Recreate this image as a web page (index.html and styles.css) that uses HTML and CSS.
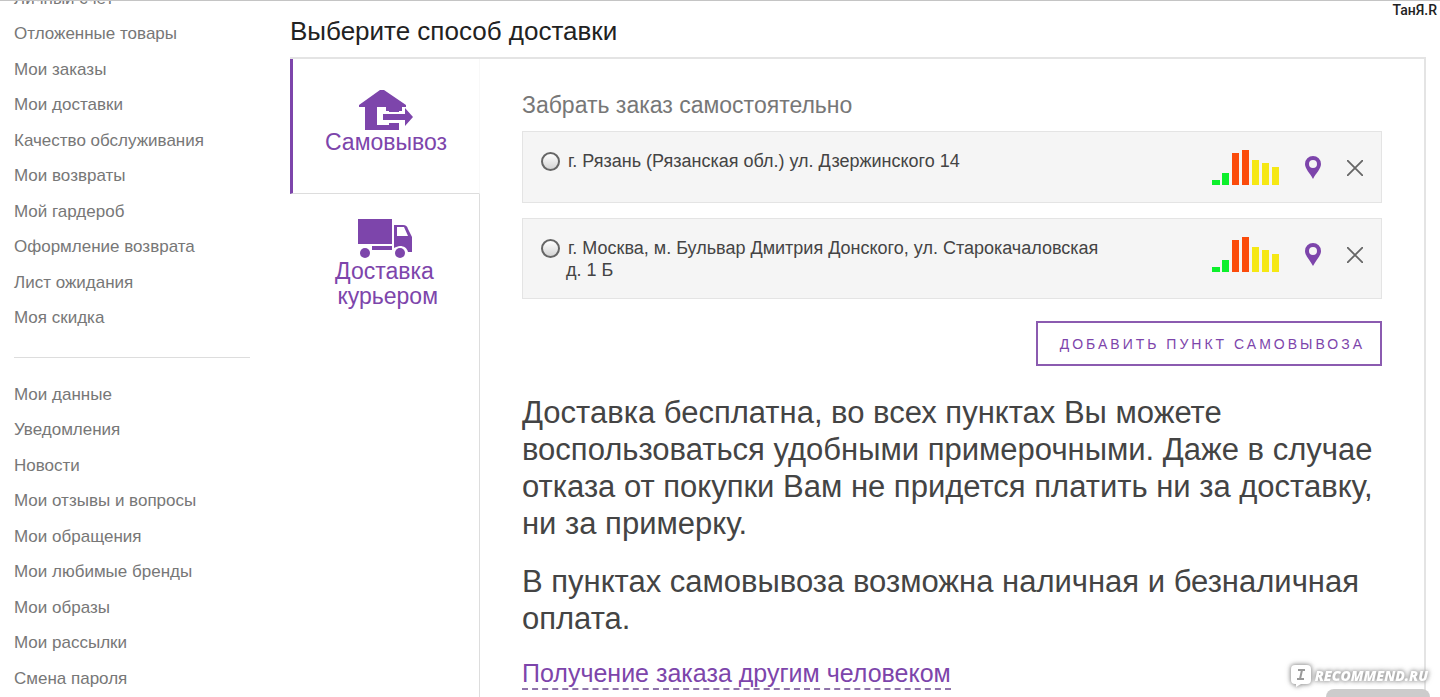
FILE: index.html
```html
<!DOCTYPE html>
<html lang="ru">
<head>
<meta charset="utf-8">
<title>Выберите способ доставки</title>
<link rel="stylesheet" href="styles.css">
</head>
<body>
<div class="page">
  <nav class="sidebar" aria-label="Личный кабинет">
    <ul class="menu">
      <li><a href="#">Личный счёт</a></li>
      <li><a href="#">Отложенные товары</a></li>
      <li><a href="#">Мои заказы</a></li>
      <li><a href="#">Мои доставки</a></li>
      <li><a href="#">Качество обслуживания</a></li>
      <li><a href="#">Мои возвраты</a></li>
      <li><a href="#">Мой гардероб</a></li>
      <li><a href="#">Оформление возврата</a></li>
      <li><a href="#">Лист ожидания</a></li>
      <li><a href="#">Моя скидка</a></li>
    </ul>
    <ul class="menu menu-second">
      <li><a href="#">Мои данные</a></li>
      <li><a href="#">Уведомления</a></li>
      <li><a href="#">Новости</a></li>
      <li><a href="#">Мои отзывы и вопросы</a></li>
      <li><a href="#">Мои обращения</a></li>
      <li><a href="#">Мои любимые бренды</a></li>
      <li><a href="#">Мои образы</a></li>
      <li><a href="#">Мои рассылки</a></li>
      <li><a href="#">Смена пароля</a></li>
    </ul>
  </nav>

  <main class="main">
    <h1 class="title">Выберите способ доставки</h1>
    <div class="panel">
      <div class="tabs">
        <button type="button" class="tab tab-active">
          <svg class="tab-icon" viewBox="0 0 56 40" aria-hidden="true">
            <path fill="#7d45ab" d="M22 0h4l22 15v2h-4v4h-4v-4h-9v4h-3v-4h-9v18h12v-2h10v7H7V17H1v-2z"/>
            <path fill="#7d45ab" d="M31 17h10v5H31z"/>
            <path fill="#7d45ab" d="M25 24h22v-6l8 9-8 9v-6H25z"/>
          </svg>
          <span>Самовывоз</span>
        </button>
        <button type="button" class="tab">
          <svg class="tab-icon" viewBox="0 0 56 40" aria-hidden="true">
            <g fill="#7d45ab">
              <path d="M1 0h34v25H1zM15 27h20v4H15z"/>
              <path fill-rule="evenodd" d="M37 6h9c3 0 4 1 5 4l4 8v15h-4c-1-4-4-6-8-6-2 0-4 1-6 2zM40 8v9h11l-4-9z"/>
              <circle cx="8" cy="34" r="5"/><circle cx="43" cy="34" r="5"/>
            </g>
          </svg>
          <span>Доставка <br>&nbsp;курьером</span>
        </button>
      </div>

      <section class="content">
        <h2 class="subtitle">Забрать заказ самостоятельно</h2>
        <div class="points">
          <div class="point">
            <input class="radio" type="radio" name="point" id="p1">
            <label class="address" for="p1">г. Рязань (Рязанская обл.) ул. Дзержинского 14</label>
            <div class="actions">
              <svg class="load" viewBox="0 0 67 35" aria-hidden="true">
                <path fill="#0df02c" d="M0 30h8v5H0zM10 23h7v12h-7z"/><path fill="#fb4b0b" d="M20 3h7v32h-7zM30 0h7v35h-7z"/><path fill="#f5e814" d="M40 10h7v25h-7zM50 13h7v22h-7zM60 17h7v18h-7z"/>
              </svg>
              <button type="button" class="icon-btn" aria-label="Показать на карте"><svg class="pin" viewBox="0 0 16 23"><path fill="#7d45ab" fill-rule="evenodd" d="M8 0a8 8 0 0 1 8 8c0 5-5 9-8 15C5 17 0 13 0 8a8 8 0 0 1 8-8zm0 4a4 4 0 1 0 0 8 4 4 0 0 0 0-8z"/></svg></button>
              <button type="button" class="icon-btn" aria-label="Удалить"><svg class="cross" viewBox="0 0 16 16"><path stroke="#666" stroke-width="1.8" d="M0 0l16 16M16 0L0 16"/></svg></button>
            </div>
          </div>
          <div class="point">
            <input class="radio" type="radio" name="point" id="p2">
            <label class="address" for="p2">г. Москва, м. Бульвар Дмитрия Донского, ул. Старокачаловская д. 1 Б</label>
            <div class="actions">
              <svg class="load" viewBox="0 0 67 35" aria-hidden="true">
                <path fill="#0df02c" d="M0 30h8v5H0zM10 23h7v12h-7z"/><path fill="#fb4b0b" d="M20 3h7v32h-7zM30 0h7v35h-7z"/><path fill="#f5e814" d="M40 10h7v25h-7zM50 13h7v22h-7zM60 17h7v18h-7z"/>
              </svg>
              <button type="button" class="icon-btn" aria-label="Показать на карте"><svg class="pin" viewBox="0 0 16 23"><path fill="#7d45ab" fill-rule="evenodd" d="M8 0a8 8 0 0 1 8 8c0 5-5 9-8 15C5 17 0 13 0 8a8 8 0 0 1 8-8zm0 4a4 4 0 1 0 0 8 4 4 0 0 0 0-8z"/></svg></button>
              <button type="button" class="icon-btn" aria-label="Удалить"><svg class="cross" viewBox="0 0 16 16"><path stroke="#666" stroke-width="1.8" d="M0 0l16 16M16 0L0 16"/></svg></button>
            </div>
          </div>
        </div>
        <button type="button" class="add">ДОБАВИТЬ ПУНКТ САМОВЫВОЗА</button>
        <p class="info">Доставка бесплатна, во всех пунктах Вы можете воспользоваться удобными примерочными. Даже в случае отказа от покупки Вам не придется платить ни за доставку, ни за примерку.</p>
        <p class="info">В пунктах самовывоза возможна наличная и безналичная оплата.</p>
        <a class="other" href="#">Получение заказа другим человеком</a>
      </section>
    </div>
  </main>
</div>
<div class="author">ТанЯ.R</div>
<div class="up"></div>
<div class="watermark">
  <svg class="bubble" viewBox="0 0 22 24" aria-hidden="true"><path fill="#fff" d="M5 1h12q4 0 4 4v11q0 4-4 4h-6l-5 3v-3H5q-4 0-4-4V5q0-4 4-4z"/><path fill="none" stroke="#999" stroke-width="2" d="M8 6h7M7 15h7M12 6l-2 9"/></svg>
  <span>RECOMMEND.RU</span>
</div>
</body>
</html>
```
FILE: styles.css
```css
* { box-sizing: border-box; }
html { overflow: hidden; }
body {
  margin: 0;
  height: 100vh;
  overflow: hidden;
  position: relative;
  border-top: 1px solid #c4c4c4;
  background: #fff;
  font-family: "Liberation Sans", Arial, sans-serif;
  color: #444;
}
button { font: inherit; background: none; border: 0; padding: 0; cursor: pointer; }
.page { display: flex; gap: 40px; padding: 0 14px; }
.sidebar { flex: none; width: 236px; margin-top: -20px; }
.menu { list-style: none; margin: 0; padding: 0; font-size: 17px; line-height: 35px; }
.menu li:nth-child(even) { line-height: 36px; }
.menu a { color: #777; text-decoration: none; }
.menu-second { margin-top: 21px; padding-top: 19px; border-top: 1px solid #ddd; }
.main { flex: 1; min-width: 0; }
.title { margin: 0; padding-top: 12px; font-size: 26px; line-height: 36px; font-weight: 400; color: #222; }
.panel { display: flex; margin-top: 8px; border: 2px solid #e4e4e4; border-width: 2px 2px 0 0; }
.tabs { flex: none; width: 190px; display: flex; flex-direction: column; }
.tab {
  display: flex; flex-direction: column; align-items: center;
  padding-top: 25px;
  font-size: 23px; line-height: 25px; color: #7d45ab;
  border-right: 1px solid #ddd;
}
.tab:last-child { flex: 1; }
.tab-active {
  height: 135px; padding-top: 31px;
  border-left: 3px solid #7d45ab; border-bottom: 1px solid #ddd; border-right-color: #f8f8f8;
}
.tab-icon { width: 56px; height: 40px; }
.content { flex: 1; min-width: 0; padding: 32px 42px 24px; }
.subtitle { margin: 0; font-size: 23px; line-height: 28px; font-weight: 400; color: #777; }
.points { display: grid; gap: 15px; margin-top: 12px; }
.point {
  display: flex; align-items: flex-start;
  padding: 18px 18px 17px;
  background: #f5f5f5; border: 1px solid #e4e4e4;
}
.radio {
  appearance: none; flex: none; width: 19px; height: 19px; margin: 2px 6px 0 0;
  border: 2px solid #666; border-radius: 50%;
  background: linear-gradient(#fff, #d4d4d4);
}
.address { flex: 1; max-width: 550px; font-size: 18px; line-height: 22px; text-indent: 2px; }
.actions { display: flex; align-items: center; gap: 26px; margin-left: auto; }
.load { width: 67px; height: 35px; }
.icon-btn { display: flex; }
.pin { width: 16px; height: 23px; }
.cross { width: 16px; height: 16px; }
.add {
  display: block; margin: 22px 0 0 auto; height: 45px; padding: 0 15px 0 22px;
  border: 2px solid #8b5bb0; color: #7d45ab;
  font-size: 14px; letter-spacing: 3px;
}
.info { margin: 28px 0 21px; font-size: 31px; line-height: 37px; }
.info + .info { margin-top: 0; }
.other {
  display: inline-block; font-size: 25px; line-height: 30px;
  color: #7d45ab; text-decoration: none; border-bottom: 2px dashed #8f74aa;
}
.author {
  position: absolute; top: 0; right: 3px;
  font: 500 14px/18px Roboto, sans-serif; color: #222;
}
.up {
  position: absolute; right: 10px; bottom: 0; width: 104px; height: 8px;
  border-radius: 40px 40px 0 0; background: #ccc;
}
.watermark {
  position: absolute; right: 12px; bottom: 9px;
  display: flex; align-items: center; gap: 3px;
  font: italic 800 14px/22px "Open Sans", sans-serif; color: #fff;
  filter: drop-shadow(0 0 2px #999) drop-shadow(0 0 2px #bbb);
}
.bubble { width: 22px; height: 24px; }
```
